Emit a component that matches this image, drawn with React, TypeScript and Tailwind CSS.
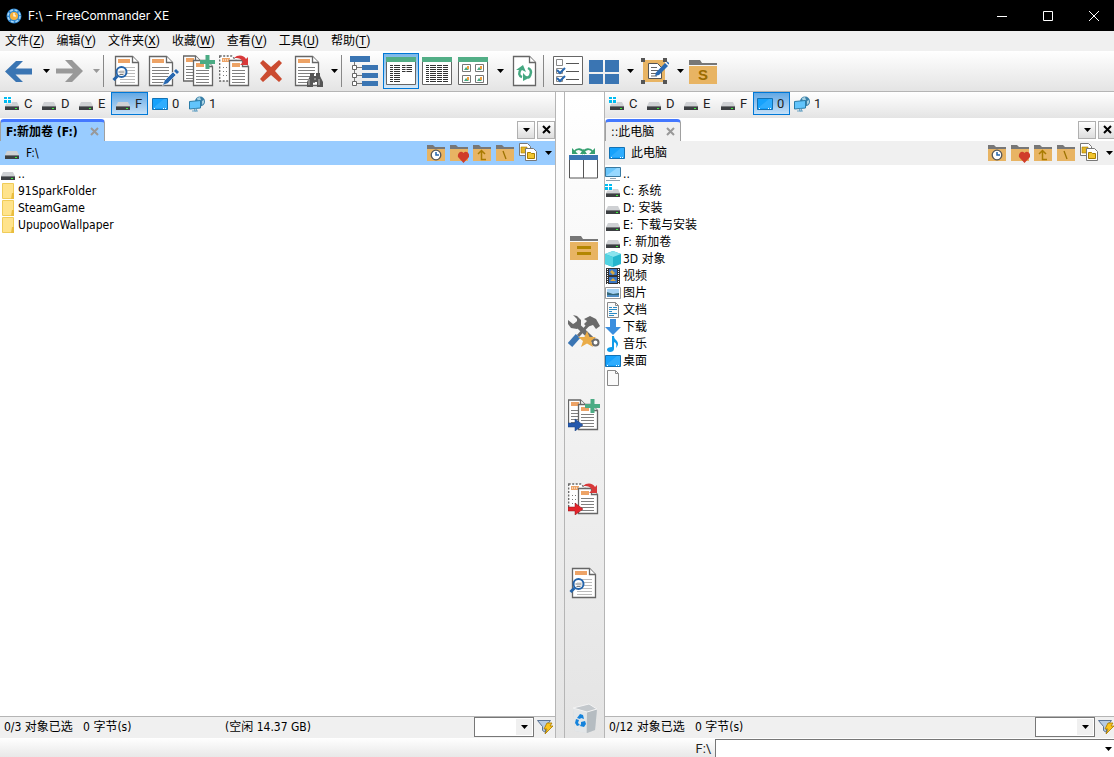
import type { ReactNode } from "react";
import clsx from "clsx";

type IconProps = { className?: string };

function Icon({ size = "size-8", box = "0 0 32 32", children }: { size?: string; box?: string; children: ReactNode }) {
  return (
    <svg viewBox={box} className={clsx("shrink-0", size)} fill="none" aria-hidden="true">
      {children}
    </svg>
  );
}

/* ---------- shared pieces of the document icons ---------- */

function Doc({ x, y, w, h, color = "#fff", dashed }: { x: number; y: number; w: number; h: number; color?: string; dashed?: boolean }) {
  return (
    <>
      <path
        d={`M${x} ${y}h${w - 6}l6 6v${h - 6}h${-w}z`}
        fill={color}
        stroke="#666"
        strokeWidth="1.3"
        strokeDasharray={dashed ? "2 1.5" : undefined}
      />
      {!dashed && <path d={`M${x + w - 6} ${y}v6h6`} fill="#fff" stroke="#666" strokeWidth="1.3" />}
    </>
  );
}

function Lines({ x, y, w, n, step = 3, color = "#808080" }: { x: number; y: number; w: number; n: number; step?: number; color?: string }) {
  const d = Array.from({ length: n }, (_, i) => `M${x} ${y + i * step}h${w}`).join("");
  return <path d={d} stroke={color} strokeWidth="1" />;
}

function Magnifier({ x, y }: { x: number; y: number }) {
  return (
    <g stroke="#2464ab" transform={`translate(${x} ${y})`}>
      <circle r="5" strokeWidth="2" fill="#fff" fillOpacity="0.6" />
      <path d="M-3 0h6M-2 2.5h4" stroke="#777" />
      <path d="M-4 4l-4 4" strokeWidth="3" />
    </g>
  );
}

/* ---------- main toolbar ---------- */

const BackIcon = () => (
  <Icon><path d="M2 16.500L13 6h7l-7.500 7.500H29v6H12.500L20 27h-7z" fill="#3a75b3" /></Icon>
);

const ForwardIcon = () => (
  <Icon><path d="M30 16L19 5h-7l8 8.500H3v5h17L12 27h7z" fill="#999" /></Icon>
);

const PreviewIcon = () => (
  <Icon>
    <Doc x={4.5} y={1.5} w={23} h={29} />
    <path d="M7 4h12v4H7z" fill="#eda366" />
    <Lines x={9} y={12.5} w={15} n={6} color="#bbb" />
    <Magnifier x={10.500} y={17} />
  </Icon>
);

const EditIcon = () => (
  <Icon>
    <Doc x={2.5} y={1.500} w={23} h={29} />
    <path d="M5 4h12v4H5z" fill="#eda366" />
    <Lines x={5} y={12.5} w={17} n={6} />
    <path d="M17.500 25.500L26 17l3 3-8.500 8.500-5 2z" fill="#2868b0" stroke="#fff" strokeWidth="0.600" />
    <path d="M27 16l2-2 3 3-2 2z" fill="#2868b0" />
  </Icon>
);

function CopyIcon({ arrow }: { arrow?: boolean }) {
  return (
    <Icon>
      <Doc x={0.5} y={1} w={18} h={25} />
      <path d="M3 3h8v4H3z" fill="#eda366" />
      <Lines x={3} y={11.5} w={7} n={5} />
      <Doc x={10.5} y={5.5} w={19} h={25} />
      <path d="M13 8h8v4h-8z" fill="#eda366" />
      <Lines x={13} y={15.500} w={13} n={5} />
      <path d="M22.500 0h4v5H32v4h-5.500v5h-4V9H17V5h5.500z" fill="#4bab84" />
      {arrow && <path d="M0 24h7v-4l8 6-8 6v-4H0z" fill="#2559ad" stroke="#173c7c" strokeWidth="0.500" />}
    </Icon>
  );
}

function MoveIcon({ arrow }: { arrow?: boolean }) {
  return (
    <Icon>
      <Doc x={0.7} y={1} w={18} h={25} dashed />
      <path d="M3 3h8v4H3z" fill="#eda366" />
      <path d="M4 5h7" stroke="#fff" strokeDasharray="1 1" />
      <path d="M4 12.500h6M4 16.500h6M4 20.500h6" stroke="#777" strokeDasharray="1 2" />
      <Doc x={10.5} y={5.5} w={19} h={25} />
      <path d="M13 8h8v4h-8z" fill="#eda366" />
      <Lines x={13} y={15.5} w={13} n={5} />
      <path d="M15 3c4-4 10-3 12 1l2-2v8h-8l3-3c-2-4-5-4-9-4z" fill="#d8393a" />
      {arrow && <path d="M0 24h7v-4l8 6-8 6v-4H0z" fill="#e2242b" stroke="#8c1418" strokeWidth="0.5" />}
    </Icon>
  );
}

const DeleteIcon = () => (
  <Icon><path d="M5 8l3-3 8 7 8-7 3 3-7 8 7 8-3 3-8-7-8 7-3-3 7-8z" fill="#cb4b30" /></Icon>
);

const SearchIcon = () => (
  <Icon>
    <Doc x={4.5} y={1.5} w={23} h={29} />
    <path d="M7 4h12v4H7z" fill="#eda366" />
    <Lines x={7} y={12.5} w={17} n={6} />
    <path d="M19 18h4v3h2v-3h4v3l3 6v5h-6v-5h-4v5h-6v-5l3-6z" fill="#555" />
    <path d="M18 24v6M28 24v6M23 24h2" stroke="#bbb" />
  </Icon>
);

const TreeIcon = () => (
  <Icon>
    <path d="M1 1h20v6H1zM13 10h16v5H13zM13 18h16v5H13zM13 26h16v5H13z" fill="#3a75b3" />
    <path d="M5.500 7v22M5.500 12.500H13M5.500 20.500H13M5.500 28.500H13" stroke="#777" />
    <path d="M3.500 10.500h4v4h-4zM3.500 18.500h4v4h-4zM3.500 26.500h4v4h-4z" fill="#fff" stroke="#666" />
  </Icon>
);

function WindowFrame() {
  return (
    <>
      <path d="M1.500 3h29v26.500h-29z" fill="#fff" stroke="#666" />
      <path d="M1 2h30v5H1z" fill="#52ae86" />
    </>
  );
}

const DetailsIcon = () => (
  <Icon>
    <WindowFrame />
    <Lines x={5} y={10.5} w={10} n={9} step={2} color="#333" />
    <Lines x={17} y={10.5} w={10} n={4} step={2} color="#333" />
    <path d="M8.500 10v17M21 10v8" stroke="#fff" />
  </Icon>
);

const ListIcon = () => (
  <Icon>
    <WindowFrame />
    <Lines x={5} y={10.5} w={22} n={9} step={2} color="#333" />
    <path d="M8.500 10v17M15.500 10v17M21.500 10v17" stroke="#fff" />
  </Icon>
);

const ThumbsIcon = () => (
  <Icon>
    <WindowFrame />
    {["M5.500 9.500h8v7h-8z", "M18.500 9.500h8v7h-8z", "M5.500 20.500h8v7h-8z", "M18.500 20.500h8v7h-8z"].map((d) => (
      <path key={d} d={d} stroke="#777" fill="#fff" />
    ))}
    <path d="M7 15l2-3 3 3zM20 15l2-3 3 3zM7 26l2-3 3 3zM20 26l2-3 3 3z" fill="#4bab84" />
    <path d="M10 11h2v3h-2zM23 11h2v3h-2zM10 22h2v3h-2zM23 22h2v3h-2z" fill="#eda040" />
  </Icon>
);

const RefreshIcon = () => (
  <Icon>
    <Doc x={6.5} y={1.5} w={22} h={29} />
    <path d="M15 22c-3-1-4-4-1-8M21 13c4 2 4 6 0 10" stroke="#45a881" strokeWidth="2.500" />
    <path d="M9 15l7-5 3 7-4-2zM24 22l-8 4v-8l3 3z" fill="#45a881" />
  </Icon>
);

const ChecklistIcon = () => (
  <Icon>
    <path d="M2.500 1.500h29v28h-29z" fill="#fff" stroke="#666" />
    <path d="M5.500 4.500h6v6h-6zM5.500 13.500h6v5h-6zM5.500 21.500h6v5h-6z" stroke="#888" />
    <path d="M15 8.500h13M15 16.500h13M15 24.500h13" stroke="#555" />
    <path d="M6 15l3 3 5-5M6 23l3 3 5-5" stroke="#2868b0" strokeWidth="2" />
  </Icon>
);

const TilesIcon = () => (
  <Icon><path d="M2 5h14v12H2zM18 5h14v12H18zM2 19h14v10H2zM18 19h14v10H18z" fill="#3a75b3" /></Icon>
);

const SelectionIcon = () => (
  <Icon>
    <path d="M6 5h22v22H6z" fill="#e8b463" />
    <path d="M4 3h4v4H4zM26 3h4v4h-4zM4 25h4v4H4zM26 25h4v4h-4z" fill="#555" />
    <path d="M11.500 8.500h9l4 4v11h-13z" fill="#fff" stroke="#555" />
    <path d="M14 12.500h6M14 15.500h8M14 18.500h8M14 21h6" stroke="#666" />
    <path d="M19 17.500L28 8l3 3-9 9-4 1z" fill="#2868b0" />
    <path d="M30 7l2 2" stroke="#2868b0" strokeWidth="1.500" />
  </Icon>
);

function FolderBase() {
  return (
    <>
      <path d="M2 5h11l2 3h15v2H2z" fill="#777" />
      <path d="M2 11h28v18H2z" fill="#e8b463" />
    </>
  );
}

const FolderSIcon = () => (
  <Icon>
    <FolderBase />
    <text x="16" y="25" textAnchor="middle" fontSize="15" fontWeight="700" fill="#9c6c00" fontFamily="Liberation Sans, sans-serif">S</text>
  </Icon>
);

/* ---------- centre strip ---------- */

const SwapPanelsIcon = () => (
  <Icon>
    <path d="M1.500 11h28v20h-28z" fill="#fff" stroke="#555" />
    <path d="M15.500 11v20" stroke="#555" />
    <path d="M1 8h29v5H1z" fill="#3a75b3" />
    <path d="M6 5c3-4 8-4 11 2M14 7c3-6 8-6 11-2" stroke="#36a070" strokeWidth="1.800" />
    <path d="M4 1v6h6zM27 1v6h-6zM12 7h7l-3.500-5z" fill="#36a070" />
  </Icon>
);

const FolderEqualIcon = () => (
  <Icon>
    <FolderBase />
    <path d="M9 15h14v3H9zM9 21h14v3H9z" fill="#b38600" />
  </Icon>
);

const ToolsIcon = () => (
  <Icon>
    <path d="M7 8l19 18" stroke="#6b6b6b" strokeWidth="4.500" />
    <path d="M5 0l4 1 4 4v5l-4 4-6-1-3-4V5l5 4 4-2V4z" fill="#6b6b6b" />
    <path d="M16 4l6-3 6 3 4 7-4 3-3-4-6 2-3-3 3-3z" fill="#6b6b6b" />
    <path d="M21 9L10 21" stroke="#6b6b6b" strokeWidth="3" />
    <path d="M10 21L2 30" stroke="#3a75b3" strokeWidth="6" />
    <circle cx="27.500" cy="27.500" r="3" stroke="#6b6b6b" strokeWidth="2" fill="#fff" />
    <path d="M19 16l2.500 6H28l-5 4 2 6-6-3.500-6 3.500 2-6-5-4h6.500z" fill="#eaac48" />
  </Icon>
);

const RecycleIcon = () => (
  <Icon>
    <path d="M5 5l16-4 8 5-2 21-8 3-12-2z" fill="#d3d7da" />
    <path d="M5 5l14 4-1 21-11-2z" fill="#e3e6e8" />
    <path d="M19 9l10-3-2 21-8 3z" fill="#b5bcc1" />
    <path d="M5 5l16-4 8 5-10 3z" fill="#c3c8cc" stroke="#f4f4f4" />
    <path d="M12 11l3 1 1 4-3-1-1 1-3-1zM8 16l3 1-1 3 2 2-3 1-2-3zM13 19l4-1 1 3-2 3-4-1 1-2z" fill="#1583dc" />
  </Icon>
);

/* ---------- small icons ---------- */

function DriveIcon({ system }: { system?: boolean }) {
  return (
    <Icon size="size-4" box="0 0 16 16">
      <path d="M3 6h10l2 4H1z" fill="#cfd1d4" />
      <path d="M1 10h14v4H1z" fill="#3c3f42" />
      <path d="M1 10h14v1H1z" fill="#77797c" />
      <path d="M11 12h2v1h-2z" fill="#3bf03b" />
      {system && (
        <>
          <path d="M0 0h8v8H0z" fill="#fff" fillOpacity="0.500" />
          <path d="M0 1h3v2H0zM4 1h3v2H4zM0 4h3v3H0zM4 4h3v3H4z" fill="#00bcf2" />
        </>
      )}
    </Icon>
  );
}

const DesktopIcon = () => (
  <Icon size="size-4" box="0 0 16 16">
    <path d="M0.500 2.500h15v11h-15z" fill="#16a2fc" stroke="#1272b5" />
    <path d="M1 12L12 3h3v9z" fill="#41b4ff" fillOpacity="0.600" />
    <path d="M2 12.500h1M11 12.500h1M13 12.500h1" stroke="#fff" />
  </Icon>
);

const NetworkIcon = () => (
  <Icon size="size-4" box="0 0 16 16">
    <circle cx="11" cy="5.500" r="5" fill="#3a80a8" />
    <path d="M8 2l3-1 1 3-3 2zM13 5l2-1v3l-2 2z" fill="#a8d2e3" />
    <path d="M0.500 5.500l11-1v7.500l-11 1z" fill="#62c4fb" stroke="#2a7ca8" />
    <path d="M3 15h6M5.500 13h2v2h-2z" stroke="#6ca5c6" />
  </Icon>
);

const MonitorIcon = () => (
  <Icon size="size-4" box="0 0 16 16">
    <path d="M0.500 1.500h15v9h-15z" fill="#6bc6fb" stroke="#3979a0" />
    <path d="M1 10L12 2h3v8z" fill="#97d8ff" />
    <path d="M5 12.500h6M1 14.500h14" stroke="#90a2b0" />
  </Icon>
);

const YellowFolderIcon = () => (
  <Icon size="size-4" box="0 0 16 16">
    <path d="M2.500 0.500h11v15h-11z" fill="#ffe38b" stroke="#f0cc58" />
    <path d="M12 10h2v6h-3z" fill="#e9bd3e" />
  </Icon>
);

const CubeIcon = () => (
  <Icon size="size-4" box="0 0 16 16">
    <path d="M0 3l8-3 8 3v10l-8 3-8-3z" fill="#25b6cd" />
    <path d="M0 3l8-3 8 3-8 3z" fill="#8be4ee" />
    <path d="M0 3l8 3v10l-8-3z" fill="#52d3e1" />
  </Icon>
);

const VideoIcon = () => (
  <Icon size="size-4" box="0 0 16 16">
    <path d="M1 0h14v16H1z" fill="#333" />
    <path d="M2.500 1v15M13.500 1v15" stroke="#fff" strokeDasharray="1 1" />
    <path d="M4 1h8v6H4zM4 9h8v6H4z" fill="#3976c6" />
    <path d="M5 4l2-2 3 3-2 2zM5 13l3-3 3 3z" fill="#d7a83f" />
  </Icon>
);

const PictureIcon = () => (
  <Icon size="size-4" box="0 0 16 16">
    <path d="M0.500 2.500h15v11h-15z" fill="#fff" stroke="#999" />
    <path d="M2 4h12v8H2z" fill="#a7d3f4" />
    <path d="M2 7l6 2 6-1v4H2z" fill="#35687a" />
    <path d="M2 10h12v2H2z" fill="#4f8dc4" />
  </Icon>
);

const PageIcon = ({ text }: { text?: boolean }) => (
  <Icon size="size-4" box="0 0 16 16">
    <path d="M2.500 0.500h8l3 3v12h-11z" fill="#fafafa" stroke="#888" />
    <path d="M10.500 0.500v3h3" stroke="#888" />
    {text && <path d="M4 5.500h3M8 5.500h4M4 7.500h8M4 9.500h3M4 11.500h8M4 13.500h5" stroke="#2c8bc6" />}
  </Icon>
);

const DownloadIcon = () => (
  <Icon size="size-4" box="0 0 16 16">
    <path d="M5 0h6v8h5l-8 8-8-8h5z" fill="#3b8ede" />
  </Icon>
);

const MusicIcon = () => (
  <Icon size="size-4" box="0 0 16 16">
    <path d="M7 0h2c0 4 4 4 4 8 0 1-1 3-2 4 1-4 0-5-2-6v7c0 2-2 3-4 3s-3-1-3-2.500S4 11 7 11z" fill="#109be9" />
  </Icon>
);

function PathFolder({ kind }: { kind: "clock" | "heart" | "up" | "root" }) {
  return (
    <Icon size="size-5" box="0 0 20 20">
      <path d="M1 2h6l2 2h10v2H1z" fill="#777" />
      <path d="M1 6h18v12H1z" fill="#e8b463" />
      {kind === "clock" && (
        <>
          <circle cx="10" cy="12" r="4.800" fill="#fff" stroke="#555" strokeWidth="1.300" />
          <path d="M10 9v3h3" stroke="#2464ab" strokeWidth="1.500" />
        </>
      )}
      {kind === "heart" && (
        <path d="M14.500 20L9 14c-1-4 3-7 5.500-4C17 7 21 10 20 14z" fill="#d03d2a" />
      )}
      {kind === "up" && (
        <path d="M9.500 8v8.500H14M6 11l3.500-3.500L13 11" stroke="#a97b00" strokeWidth="1.500" />
      )}
      {kind === "root" && <path d="M8 8l3 8" stroke="#9c7200" strokeWidth="1.300" />}
    </Icon>
  );
}

const CopyPathIcon = () => (
  <Icon size="size-5" box="0 0 20 20">
    <path d="M1.500 0.500h8l3 3v9h-11z" fill="#fff" stroke="#777" />
    <path d="M3 4h6v6H3z" fill="#e3b624" stroke="#a87e00" strokeWidth="0.600" />
    <path d="M7.500 5.500h8l3 3v9h-11z" fill="#fff" stroke="#777" />
    <path d="M9.500 9.500h3l1 1h3v5h-7z" fill="#f2c52e" stroke="#a87e00" />
  </Icon>
);

const FilterIcon = () => (
  <Icon size="size-4" box="0 0 16 16">
    <path d="M0.500 1.500h13l-5 6v6l-3-2v-4z" fill="#b7cbe2" stroke="#5a7394" />
    <path d="M10 4h5l-2 3h3l-8 8 2-5H7z" fill="#fcc41c" stroke="#a77800" strokeWidth="0.800" />
  </Icon>
);

const AppLogo = () => (
  <Icon size="size-4" box="0 0 16 16">
    <circle cx="8" cy="8" r="7.500" fill="#2f86cf" />
    <circle cx="8" cy="8" r="6" stroke="#a9d8f7" strokeWidth="1.500" strokeDasharray="3 1.700" />
    <circle cx="8" cy="8" r="4" fill="#f9b13c" />
    <path d="M8 5v3h2" stroke="#fff" strokeWidth="1.200" />
  </Icon>
);

function Caret({ className }: IconProps) {
  return (
    <svg viewBox="0 0 7 4" className={clsx("h-1 w-[7px] shrink-0", className ?? "text-black")} aria-hidden="true">
      <path d="M0 0h7L3.500 4z" fill="currentColor" />
    </svg>
  );
}

/* ---------- layout ---------- */

const menus = [
  { name: "文件", key: "Z" },
  { name: "编辑", key: "Y" },
  { name: "文件夹", key: "X" },
  { name: "收藏", key: "W" },
  { name: "查看", key: "V" },
  { name: "工具", key: "U" },
  { name: "帮助", key: "T" },
];

function ToolButton({ label, active, children }: { label: string; active?: boolean; children: ReactNode }) {
  return (
    <button
      type="button"
      aria-label={label}
      className={clsx(
        "flex size-9 shrink-0 items-center justify-center",
        active && "border border-[#0078d7] bg-gradient-to-b from-[#7db8e8] to-[#d6e9f8]",
      )}
    >
      {children}
    </button>
  );
}

function DropButton({ label, className }: { label: string; className?: string }) {
  return (
    <button type="button" aria-label={label} className="flex h-9 w-[14px] shrink-0 items-center justify-end pr-px">
      <Caret className={className} />
    </button>
  );
}

const Separator = () => <span className="mr-[5px] ml-0.5 h-8 w-px shrink-0 bg-[#888]" />;

function TitleBar() {
  return (
    <header className="flex h-[31px] items-center bg-black pr-[15px] pl-[6px] text-white">
      <AppLogo />
      <h1 className="ml-1.5 flex-1 font-[family-name:Inter,sans-serif] text-xs">F:\ – FreeCommander XE</h1>
      <div className="flex gap-9">
        <button type="button" aria-label="最小化" className="size-[10px]">
          <svg viewBox="0 0 10 10" className="size-[10px]"><path d="M0 5.500h10" stroke="#fff" /></svg>
        </button>
        <button type="button" aria-label="最大化" className="size-[10px]">
          <svg viewBox="0 0 10 10" className="size-[10px]"><path d="M0.500 0.500h9v9h-9z" stroke="#fff" fill="none" /></svg>
        </button>
        <button type="button" aria-label="关闭" className="size-[10px]">
          <svg viewBox="0 0 10 10" className="size-[10px]"><path d="M0 0l10 10M10 0L0 10" stroke="#fff" /></svg>
        </button>
      </div>
    </header>
  );
}

function MenuBar() {
  return (
    <nav className="flex h-5 items-center gap-3 bg-[#f0f0f0] pl-[5px] font-[family-name:Roboto,'Noto_Sans_CJK_SC',sans-serif] text-xs">
      {menus.map((m) => (
        <button key={m.key} type="button" className="whitespace-nowrap">
          {m.name}(<u className="underline-offset-2">{m.key}</u>)
        </button>
      ))}
    </nav>
  );
}

function Toolbar() {
  return (
    <div className="flex h-[41px] items-center overflow-hidden border-b border-[#b5b5b5] bg-gradient-to-b from-white to-[#e4e4e4] pl-px">
      <ToolButton label="后退"><BackIcon /></ToolButton>
      <DropButton label="后退历史" />
      <ToolButton label="前进"><ForwardIcon /></ToolButton>
      <DropButton label="前进历史" className="text-[#999]" />
      <Separator />
      <ToolButton label="查看"><PreviewIcon /></ToolButton>
      <ToolButton label="编辑"><EditIcon /></ToolButton>
      <ToolButton label="复制"><CopyIcon /></ToolButton>
      <ToolButton label="移动"><MoveIcon /></ToolButton>
      <ToolButton label="删除"><DeleteIcon /></ToolButton>
      <ToolButton label="搜索"><SearchIcon /></ToolButton>
      <DropButton label="搜索选项" />
      <Separator />
      <ToolButton label="树"><TreeIcon /></ToolButton>
      <ToolButton label="详细信息" active><DetailsIcon /></ToolButton>
      <ToolButton label="列表"><ListIcon /></ToolButton>
      <ToolButton label="缩略图"><ThumbsIcon /></ToolButton>
      <DropButton label="缩略图大小" />
      <ToolButton label="刷新"><RefreshIcon /></ToolButton>
      <Separator />
      <ToolButton label="选择"><ChecklistIcon /></ToolButton>
      <ToolButton label="布局"><TilesIcon /></ToolButton>
      <DropButton label="布局选项" />
      <ToolButton label="选择编辑"><SelectionIcon /></ToolButton>
      <DropButton label="选择编辑选项" />
      <ToolButton label="特殊文件夹"><FolderSIcon /></ToolButton>
    </div>
  );
}

const drives = [
  { name: "C", icon: <DriveIcon system /> },
  { name: "D", icon: <DriveIcon /> },
  { name: "E", icon: <DriveIcon /> },
  { name: "F", icon: <DriveIcon /> },
  { name: "0", icon: <DesktopIcon /> },
  { name: "1", icon: <NetworkIcon /> },
];

function DriveBar({ selected }: { selected: string }) {
  return (
    <div className="flex h-[26px] items-start bg-gradient-to-b from-white to-[#e4e4e4]">
      {drives.map((d) => (
        <button
          key={d.name}
          type="button"
          className={clsx(
            "flex h-[23px] w-[37px] items-center gap-1 border pl-[3px] font-[family-name:Roboto,sans-serif] text-[13px] text-[#222]",
            d.name === selected ? "border-[#0078d7] bg-gradient-to-b from-[#62a8e4] to-[#c5e0f7]" : "border-transparent",
          )}
        >
          {d.icon}
          {d.name}
        </button>
      ))}
    </div>
  );
}

type Entry = { name: string; icon: ReactNode };

type PanelProps = {
  selected: string;
  active?: boolean;
  tab: string;
  path: string;
  pathIcon: ReactNode;
  entries: Entry[];
  status: string;
  free?: string;
};

function FilePanel({ selected, active, tab, path, pathIcon, entries, status, free }: PanelProps) {
  const smallButton = "flex size-[18px] items-center justify-center border border-[#b0b0b0] bg-gradient-to-b from-white to-[#ddd]";
  return (
    <section className="flex min-w-0 flex-1 flex-col bg-white">
      <DriveBar selected={selected} />
      <div className="flex h-[23px] items-end">
        <div
          className={clsx(
            "flex h-[22px] items-center rounded-t-sm border-x border-t-[3px] border-x-[#a0a0a0] border-t-[#4478ff] pr-[5px] pl-[5px]",
            active ? "bg-[#99ccff] font-bold" : "bg-[#f0f0f0]",
          )}
        >
          <button type="button" className="whitespace-nowrap">{tab}</button>
          <button type="button" aria-label="关闭标签" className="ml-3 flex">
            <svg viewBox="0 0 9 9" className="size-[9px]"><path d="M1 1l7 7M8 1L1 8" stroke="#999" strokeWidth="2" /></svg>
          </button>
        </div>
        <div className="ml-auto flex gap-0.5 self-center">
          <button type="button" aria-label="标签列表" className={smallButton}><Caret /></button>
          <button type="button" aria-label="关闭" className={smallButton}>
            <svg viewBox="0 0 9 9" className="size-[9px]"><path d="M1 1l7 7M8 1L1 8" stroke="#000" strokeWidth="2" /></svg>
          </button>
        </div>
      </div>
      <div className={clsx("flex h-6 items-center", active ? "bg-[#99ccff]" : "bg-[#f0f0f0]")}>
        <span className="ml-1 flex">{pathIcon}</span>
        <span className="ml-1.5 flex-1">{path}</span>
        <div className="flex items-center gap-[3px]">
          <button type="button" aria-label="历史"><PathFolder kind="clock" /></button>
          <button type="button" aria-label="收藏"><PathFolder kind="heart" /></button>
          <button type="button" aria-label="向上"><PathFolder kind="up" /></button>
          <button type="button" aria-label="根目录"><PathFolder kind="root" /></button>
          <button type="button" aria-label="复制路径"><CopyPathIcon /></button>
          <button type="button" aria-label="更多" className="flex w-[14px] justify-center"><Caret /></button>
        </div>
      </div>
      <ul className="flex-1">
        {entries.map((e, i) => (
          <li key={i} className="flex h-[17px] items-center gap-0.5 whitespace-nowrap">
            {e.icon}
            {e.name}
          </li>
        ))}
      </ul>
      <footer className="flex h-[22px] items-center border-t border-[#b5b5b5] bg-[#f0f0f0] pb-px pl-1">
        <span className="w-[221px] whitespace-pre">{status}</span>
        <span>{free}</span>
        <label className="relative ml-auto">
          <select aria-label="筛选" className="block h-5 w-[60px] appearance-none border border-[#777] bg-white">
            <option></option>
          </select>
          <span className="pointer-events-none absolute inset-y-0.5 right-0.5 flex w-4 items-center justify-center bg-[#f0f0f0]">
            <Caret />
          </span>
        </label>
        <button type="button" aria-label="应用筛选" className="mr-0.5 ml-[3px]"><FilterIcon /></button>
      </footer>
    </section>
  );
}

const leftEntries: Entry[] = [
  { name: "..", icon: <DriveIcon /> },
  { name: "91SparkFolder", icon: <YellowFolderIcon /> },
  { name: "SteamGame", icon: <YellowFolderIcon /> },
  { name: "UpupooWallpaper", icon: <YellowFolderIcon /> },
];

const rightEntries: Entry[] = [
  { name: "..", icon: <MonitorIcon /> },
  { name: "C: 系统", icon: <DriveIcon system /> },
  { name: "D: 安装", icon: <DriveIcon /> },
  { name: "E: 下载与安装", icon: <DriveIcon /> },
  { name: "F: 新加卷", icon: <DriveIcon /> },
  { name: "3D 对象", icon: <CubeIcon /> },
  { name: "视频", icon: <VideoIcon /> },
  { name: "图片", icon: <PictureIcon /> },
  { name: "文档", icon: <PageIcon text /> },
  { name: "下载", icon: <DownloadIcon /> },
  { name: "音乐", icon: <MusicIcon /> },
  { name: "桌面", icon: <DesktopIcon /> },
  { name: "", icon: <PageIcon /> },
];

function CenterStrip() {
  return (
    <div className="flex bg-gradient-to-b from-white to-[#e4e4e4] pl-2">
      <div className="flex flex-1 flex-col items-center gap-[52px] border-x border-[#b5b5b5] pt-[55px] pr-0.5 pb-[3px]">
        <button type="button" aria-label="交换面板"><SwapPanelsIcon /></button>
        <button type="button" aria-label="相同文件夹"><FolderEqualIcon /></button>
        <button type="button" aria-label="工具"><ToolsIcon /></button>
        <button type="button" aria-label="复制"><CopyIcon arrow /></button>
        <button type="button" aria-label="移动"><MoveIcon arrow /></button>
        <button type="button" aria-label="查看"><PreviewIcon /></button>
        <button type="button" aria-label="回收站" className="mt-auto"><RecycleIcon /></button>
      </div>
    </div>
  );
}

function CommandBar() {
  return (
    <div className="flex h-[19px] items-stretch bg-gradient-to-b from-white to-[#e8e8e8]">
      <label htmlFor="command" className="w-[64.200%] pt-0.5 pr-1 text-right font-[family-name:Roboto,sans-serif] text-[13px] text-[#222]">
        F:\
      </label>
      <div className="mt-px flex flex-1 items-center border-t border-l border-[#777] bg-white">
        <input id="command" type="text" className="h-full min-w-0 flex-1 px-1 outline-none" />
        <button type="button" aria-label="命令历史" className="flex w-3 justify-center"><Caret /></button>
      </div>
    </div>
  );
}

export default function App() {
  return (
    <div className="flex min-h-screen flex-col overflow-hidden bg-white font-[family-name:'DejaVu_Sans_Condensed','Noto_Sans','Noto_Sans_CJK_SC',sans-serif] text-xs text-black">
      <TitleBar />
      <MenuBar />
      <Toolbar />
      <main className="grid flex-1 grid-cols-[minmax(0,556fr)_49px_minmax(0,509fr)]">
        <div className="flex border-r border-[#b5b5b5]">
          <FilePanel
            active
            selected="F"
            tab="F:新加卷 (F:)"
            path="F:\"
            pathIcon={<DriveIcon />}
            entries={leftEntries}
            status="0/3 对象已选   0 字节(s)"
            free="(空闲 14.37 GB)"
          />
        </div>
        <CenterStrip />
        <div className="-mr-0.5 flex">
          <FilePanel
            selected="0"
            tab="::此电脑"
            path="此电脑"
            pathIcon={<DesktopIcon />}
            entries={rightEntries}
            status="0/12 对象已选   0 字节(s)"
          />
        </div>
      </main>
      <CommandBar />
    </div>
  );
}
